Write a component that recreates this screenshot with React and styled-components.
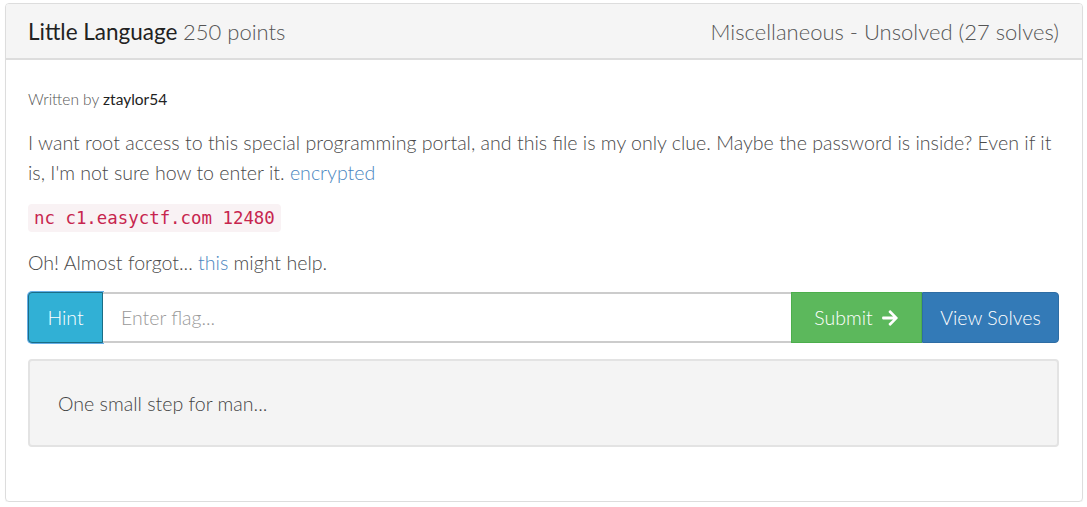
import React from "react";
import styled, { createGlobalStyle } from "styled-components";

const Global = createGlobalStyle`
  body {
    margin: 0;
    background: #fff;
    font-family: Lato, "Liberation Sans", sans-serif;
    color: #333;
  }
`;

const Page = styled.div`
  padding: 3px 4px 0 5px;
`;

const Panel = styled.div`
  border: 1px solid #ddd;
  border-radius: 4px;
  box-shadow: 0 1px 1px rgba(0, 0, 0, 0.05);
  height: 499px;
  box-sizing: border-box;
  overflow: hidden;
`;

const Header = styled.div`
  display: flex;
  justify-content: space-between;
  align-items: center;
  height: 54px;
  padding: 0 23px 0 22px;
  background: #f5f5f5;
  border-bottom: 2px solid #ddd;
  font-size: 22px;
`;

const Title = styled.span`
  color: #222;
  font-weight: 400;
  font-size: 22.5px;
`;

const Points = styled.span`
  color: #555;
  font-weight: 300;
`;

const Meta = styled.span`
  color: #555;
  font-weight: 300;
`;

const Body = styled.div`
  padding: 30px 23px 0 22px;
`;

const Byline = styled.div`
  font-size: 15.5px;
  line-height: 19px;
  font-weight: 300;
  color: #555;
  margin-bottom: 19px;

  b {
    font-weight: 400;
    color: #222;
  }
`;

const Text = styled.p`
  margin: 0 0 12px;
  font-size: 19.6px;
  line-height: 30px;
  font-weight: 300;
  color: #4a4a4a;
`;

const Link = styled.a`
  color: #4a86c0;
  text-decoration: none;
`;

const Code = styled.code`
  display: block;
  width: fit-content;
  font-family: "DejaVu Sans Mono", "Liberation Mono", monospace;
  font-size: 17.4px;
  line-height: 22px;
  color: #c7254e;
  background: #f9f2f4;
  border-radius: 4px;
  padding: 3px 6px;
  margin: 16px 0 16px;
`;

const Group = styled.div`
  display: flex;
  height: 51px;
  margin-top: 14px;
`;

const Btn = styled.button`
  font-family: inherit;
  font-size: 19.5px;
  font-weight: 300;
  color: #fff;
  white-space: nowrap;
  border: 1px solid ${(p) => p.$border};
  background: ${(p) => p.$bg};
  padding: 0 8px;
  display: flex;
  align-items: center;
  justify-content: center;
  gap: 8px;
  cursor: pointer;
  flex: 0 0 ${(p) => p.$width}px;
`;

const HintBtn = styled(Btn)`
  border-radius: 4px 0 0 4px;
  box-shadow: 0 0 0 1px #66afe9;
`;

const FlagInput = styled.input`
  flex: 1;
  min-width: 0;
  font-family: inherit;
  font-size: 19.5px;
  font-weight: 300;
  padding: 0 18px;
  border: 2px solid #ccc;
  border-left: none;
  border-right: none;
  outline: none;
  color: #555;

  &::placeholder {
    color: #999;
  }
`;

const LastBtn = styled(Btn)`
  border-radius: 0 4px 4px 0;
`;

const Well = styled.div`
  margin-top: 16px;
  height: 88px;
  box-sizing: border-box;
  background: #f4f4f4;
  border: 2px solid #e3e3e3;
  border-radius: 4px;
  display: flex;
  align-items: center;
  padding: 0 28px;
  font-size: 19.6px;
  font-weight: 300;
  color: #444;
`;

const Arrow = () => (
  <svg width="18" height="18" viewBox="0 0 448 512" aria-hidden="true">
    <path
      fill="#fff"
      d="M190.5 66.9l22.2-22.2c9.4-9.4 24.6-9.4 33.9 0L441 239c9.4 9.4 9.4 24.6 0 33.9L246.6 467.3c-9.4 9.4-24.6 9.4-33.9 0l-22.2-22.2c-9.5-9.5-9.3-25 .4-34.3L311.4 296H24c-13.3 0-24-10.7-24-24v-32c0-13.3 10.7-24 24-24h287.4L190.9 101.2c-9.8-9.3-10-24.8-.4-34.3z"
    />
  </svg>
);

export default function App() {
  return (
    <>
      <Global />
      <Page>
        <Panel>
          <Header>
            <div>
              <Title>Little Language</Title> <Points>250 points</Points>
            </div>
            <Meta>Miscellaneous - Unsolved (27 solves)</Meta>
          </Header>
          <Body>
            <Byline>
              Written by <b>ztaylor54</b>
            </Byline>
            <Text>
              I want root access to this special programming portal, and this
              file is my only clue. Maybe the password is inside? Even if it
              is, I'm not sure how to enter it. <Link>encrypted</Link>
            </Text>
            <Code>nc c1.easyctf.com 12480</Code>
            <Text>
              Oh! Almost forgot... <Link>this</Link> might help.
            </Text>
            <Group>
              <HintBtn $bg="#31b0d5" $border="#1b6d85" $width={75}>
                Hint
              </HintBtn>
              <FlagInput placeholder="Enter flag..." />
              <Btn $bg="#5cb85c" $border="#4cae4c" $width={131}>
                Submit <Arrow />
              </Btn>
              <LastBtn $bg="#337ab7" $border="#2e6da4" $width={137}>
                View Solves
              </LastBtn>
            </Group>
            <Well>One small step for man...</Well>
          </Body>
        </Panel>
      </Page>
    </>
  );
}
